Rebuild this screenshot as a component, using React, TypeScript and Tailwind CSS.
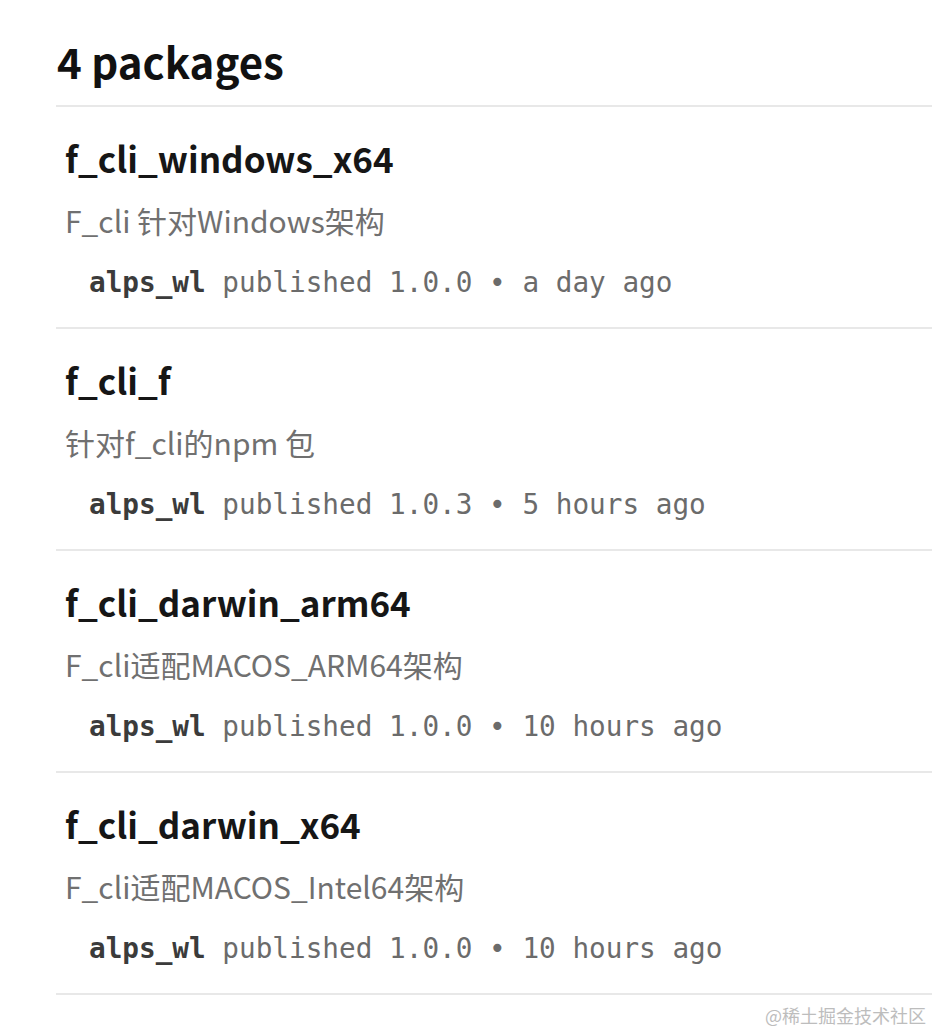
import React from 'react';

type Pkg = {
    name: string;
    description: string;
    publisher: string;
    version: string;
    when: string;
};

// package list as shown on the profile page
const packages: Pkg[] = [
    { name: 'f_cli_windows_x64', description: 'F_cli 针对Windows架构', publisher: 'alps_wl', version: '1.0.0', when: 'a day ago' },
    { name: 'f_cli_f', description: '针对f_cli的npm 包', publisher: 'alps_wl', version: '1.0.3', when: '5 hours ago' },
    { name: 'f_cli_darwin_arm64', description: 'F_cli适配MACOS_ARM64架构', publisher: 'alps_wl', version: '1.0.0', when: '10 hours ago' },
    { name: 'f_cli_darwin_x64', description: 'F_cli适配MACOS_Intel64架构', publisher: 'alps_wl', version: '1.0.0', when: '10 hours ago' },
];

const sans = "font-['Noto_Sans_CJK_SC','Noto_Sans',sans-serif]";

function PackageRow({ pkg }: { pkg: Pkg }) {
    return (
        <section className="border-b-2 border-[#e8e8e8] px-[9px] pt-[29px] pb-[24px]">
            <h3 className="text-[35px] leading-[44px] font-bold text-[#161616]">{pkg.name}</h3>
            <p className="mt-[20px] text-[30px] leading-[40px] text-[#707070]">{pkg.description}</p>
            <div className="mt-[23px] pl-[24px] font-['DejaVu_Sans_Mono','Liberation_Mono',monospace] text-[27.7px] leading-[40px] text-[#6b6b6b] whitespace-pre">
                <span className="font-bold text-[#3b3b3b]">{pkg.publisher}</span>
                {` published ${pkg.version} • ${pkg.when}`}
            </div>
        </section>
    );
}

export default function App() {
    return (
        <div className={`${sans} bg-white w-full h-[1032px] overflow-hidden pl-[56px]`}>
            {/* Header */}
            <div className="border-b-2 border-[#e8e8e8] pt-[31px] pb-[14px]">
                <h2 className="pl-[1px] text-[42px] leading-[60px] font-bold text-[#111111]">4 packages</h2>
            </div>

            {/* List */}
            {packages.map((pkg) => (
                <PackageRow key={pkg.name} pkg={pkg} />
            ))}

            {/* watermark */}
            <div className="pr-[6px] pt-[6px] text-right text-[18px] leading-[28px] text-[#bdbdbd]">@稀土掘金技术社区</div>
        </div>
    );
}
